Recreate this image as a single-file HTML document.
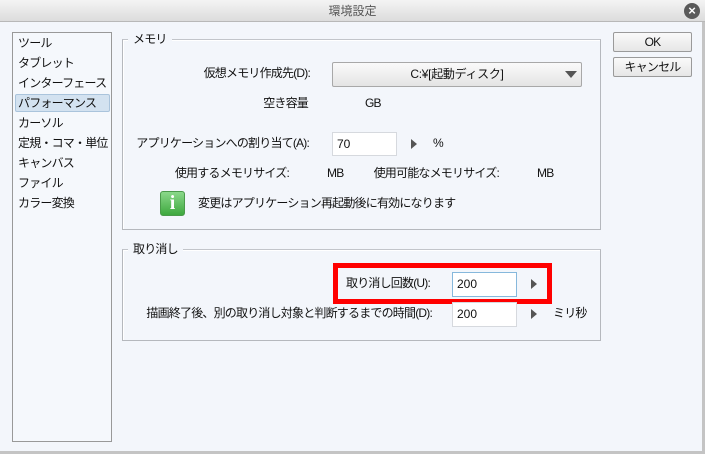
<!DOCTYPE html>
<html><head><meta charset="utf-8"><style>
*{margin:0;padding:0;box-sizing:border-box}
body{width:705px;height:454px;overflow:hidden;background:#f3f6fb;font-family:"Liberation Sans","Noto Sans CJK JP",sans-serif;font-size:12px;letter-spacing:-0.8px;color:#111;position:relative}
.a{position:absolute;white-space:nowrap;line-height:14px}
.r{position:absolute;white-space:nowrap;line-height:14px;text-align:right}
.title{position:absolute;left:0;top:0;width:705px;height:22px;background:linear-gradient(#f4f4f4,#dcdcdc);border-bottom:1px solid #b8b8b8;text-align:center;line-height:22px;color:#555;font-size:12px;letter-spacing:0}
.list{position:absolute;left:12px;top:32px;width:100px;height:410px;background:#f5f8fc;border:1px solid #999}
.list div{position:absolute;left:5px;line-height:14px;white-space:nowrap}
.list .sel{left:2px;top:61px;width:95px;height:18px;background:#d3e2f0;border:1px solid #aac4dc;border-radius:2px}
.grp{position:absolute;border:1px solid #b5b8bd;border-top-color:#c2c5ca;box-shadow:inset 1px 1px 0 #fff}
.leg{position:absolute;background:#f3f6fb;padding:0 5px;line-height:14px}
.btn{position:absolute;background:linear-gradient(#fafafa,#e6e6e6);border:1px solid #9a9a9a;border-radius:2px;text-align:center;line-height:18px}
.inp{position:absolute;background:#fff;border:1px solid #d6d9de;padding-left:4px;line-height:22px;letter-spacing:0}
.tri{position:absolute;width:0;height:0;border-top:5px solid transparent;border-bottom:5px solid transparent;border-left:6px solid #555}
</style></head><body>
<div class="title">環境設定</div>
<div style="position:absolute;left:684px;top:3px;width:16px;height:16px;border-radius:50%;background:#5a5a5a;color:#fff;font-size:13px;line-height:16px;text-align:center;font-weight:bold;letter-spacing:0">×</div>
<div style="position:absolute;left:702px;top:22px;width:3px;height:432px;background:#c4c4c4"></div>
<div style="position:absolute;left:0;top:451px;width:705px;height:3px;background:#c4c4c4"></div>

<div class="list">
<div class="sel"></div>
<div style="top:3px">ツール</div>
<div style="top:23px">タブレット</div>
<div style="top:43px">インターフェース</div>
<div style="top:63px">パフォーマンス</div>
<div style="top:83px">カーソル</div>
<div style="top:103px">定規・コマ・単位</div>
<div style="top:123px">キャンバス</div>
<div style="top:143px">ファイル</div>
<div style="top:163px">カラー変換</div>
</div>

<div class="grp" style="left:122px;top:39px;width:479px;height:191px"></div>
<div class="leg" style="left:128px;top:32px">メモリ</div>
<div class="r" style="right:395px;top:66px">仮想メモリ作成先(D):</div>
<div style="position:absolute;left:332px;top:62px;width:250px;height:25px;background:linear-gradient(#fafafa,#e4e4e4);border:1px solid #a8a8a8;border-radius:2px;text-align:center;line-height:23px;letter-spacing:-0.3px">C:¥[起動ディスク]</div>
<div style="position:absolute;left:565px;top:71px;border-left:6px solid transparent;border-right:6px solid transparent;border-top:7px solid #555"></div>
<div class="r" style="right:397px;top:96px">空き容量</div>
<div class="a" style="left:365px;top:96px">GB</div>
<div class="r" style="right:396px;top:136px">アプリケーションへの割り当て(A):</div>
<div class="inp" style="left:332px;top:132px;width:65px;height:24px">70</div>
<div class="tri" style="left:411px;top:139px"></div>
<div class="a" style="left:433px;top:136px">%</div>
<div class="r" style="right:416px;top:166px">使用するメモリサイズ:</div>
<div class="a" style="left:327px;top:166px">MB</div>
<div class="r" style="right:206px;top:166px">使用可能なメモリサイズ:</div>
<div class="a" style="left:537px;top:166px">MB</div>
<div style="position:absolute;left:160px;top:191px;width:25px;height:25px;border-radius:3px;background:linear-gradient(#8ad88a,#3ea83e);border:1px solid #4a9a4a;color:#fff;font-family:'Liberation Serif',serif;font-weight:bold;font-size:20px;line-height:23px;text-align:center;letter-spacing:0">i</div>
<div class="a" style="left:198px;top:196px">変更はアプリケーション再起動後に有効になります</div>

<div class="grp" style="left:122px;top:249px;width:479px;height:92px"></div>
<div class="leg" style="left:128px;top:242px">取り消し</div>
<div style="position:absolute;left:333px;top:263px;width:219px;height:41px;border:5px solid #f00"></div>
<div class="r" style="right:275px;top:276px">取り消し回数(U):</div>
<div class="inp" style="left:452px;top:272px;width:65px;height:25px;border-color:#86b8dc">200</div>
<div class="tri" style="left:531px;top:279px"></div>
<div class="r" style="right:273px;top:306px">描画終了後、別の取り消し対象と判断するまでの時間(D):</div>
<div class="inp" style="left:452px;top:302px;width:65px;height:25px">200</div>
<div class="tri" style="left:531px;top:309px"></div>
<div class="a" style="left:553px;top:306px">ミリ秒</div>

<div class="btn" style="left:613px;top:32px;width:79px;height:20px">OK</div>
<div class="btn" style="left:613px;top:57px;width:79px;height:20px">キャンセル</div>
</body></html>
